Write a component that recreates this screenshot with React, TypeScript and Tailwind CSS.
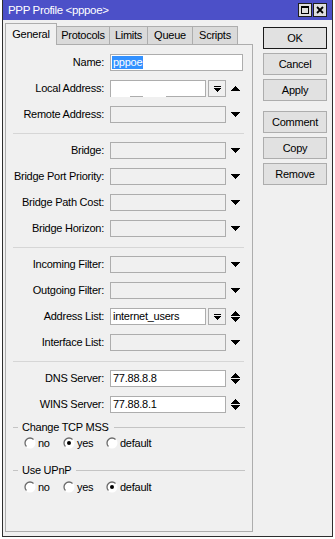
import React from "react";

function Up() {
  return (
    <svg width="9" height="5" viewBox="0 0 9 5" shapeRendering="crispEdges">
      <polygon points="4.5,0 9,5 0,5" fill="#000" />
    </svg>
  );
}
function Down() {
  return (
    <svg width="9" height="5" viewBox="0 0 9 5" shapeRendering="crispEdges">
      <polygon points="0,0 9,0 4.5,5" fill="#000" />
    </svg>
  );
}
function UpDown() {
  return (
    <svg width="9" height="11" viewBox="0 0 9 11" shapeRendering="crispEdges">
      <polygon points="4.5,0 9,5 0,5" fill="#000" />
      <polygon points="0,6 9,6 4.5,11" fill="#000" />
    </svg>
  );
}
function DropBtn() {
  return (
    <div className="ml-[2px] w-[18px] h-[17px] border border-[#adadad] bg-[#f0f0f0] flex items-center justify-center">
      <svg width="7" height="6" viewBox="0 0 7 6" shapeRendering="crispEdges">
        <rect x="0" y="0" width="7" height="1" fill="#000" />
        <polygon points="0,2 7,2 3.5,6" fill="#000" />
      </svg>
    </div>
  );
}

function Radio({ on }: { on?: boolean }) {
  return (
    <svg width="12" height="12" viewBox="0 0 12 12">
      <circle cx="6" cy="6" r="5.5" fill="#ffffff" />
      <path d="M2.46 9.54 A5 5 0 0 1 9.54 2.46" fill="none" stroke="#6a6a6a" strokeWidth="1.3" />
      {on && <circle cx="6" cy="6" r="2" fill="#000" />}
    </svg>
  );
}

function Row({ label, children }: { label: string; children: React.ReactNode }) {
  return (
    <div className="flex items-center h-[17px]">
      <div className="w-[98px] text-right whitespace-nowrap">{label}</div>
      <div className="ml-[6px] flex items-center">{children}</div>
    </div>
  );
}

function Dis({ arrow = "down" }: { arrow?: string }) {
  return (
    <>
      <div className="w-[116px] h-[17px] border border-[#adadad] bg-[#f0f0f0]" />
      <div className="ml-[5px] flex items-center">{arrow === "down" ? <Down /> : <Up />}</div>
    </>
  );
}

function Sep() {
  return <div className="ml-[7px] w-[231px] h-px bg-[#d6d6d6] mt-[10px] mb-[8px]" />;
}

function Group({ title }: { title: string }) {
  return (
    <div className="flex items-center h-[14px]">
      <div className="ml-[7px] w-[5px] h-px bg-[#c4c4c4]" />
      <div className="ml-[4px] whitespace-nowrap">{title}</div>
      <div className="ml-[5px] flex-1 h-px bg-[#c4c4c4] mr-[7px]" />
    </div>
  );
}

function Radios({ value }: { value: number }) {
  return (
    <div className="flex items-center h-[14px] pl-[18px]">
      <div className="w-[39px] flex items-center">
        <Radio on={value === 0} />
        <span className="ml-[2px]">no</span>
      </div>
      <div className="w-[43px] flex items-center">
        <Radio on={value === 1} />
        <span className="ml-[2px]">yes</span>
      </div>
      <div className="flex items-center">
        <Radio on={value === 2} />
        <span className="ml-[2px]">default</span>
      </div>
    </div>
  );
}

function Btn({ children, def }: { children: React.ReactNode; def?: boolean }) {
  return (
    <div
      className={
        "w-[64px] h-[22px] flex items-center justify-center bg-[#e1e1e1] border " +
        (def ? "border-[#1a1a1a]" : "border-[#adadad]")
      }
    >
      {children}
    </div>
  );
}

export default function App() {
  return (
    <div className="w-[335px] h-[539px] bg-white font-['Liberation_Sans',Arial,sans-serif] text-[11px] tracking-[-0.25px] text-black leading-none">
      <div className="ml-[2px] w-[331px] h-[537px] border-l border-r border-b border-[#2e2e2e] bg-[#f0f0f0] flex flex-col">
        {/* title bar */}
        <div className="h-[20px] bg-[#4c50c8] flex items-center">
          <div className="pl-[5px] pt-[2px] text-white text-[11.5px] tracking-[-0.35px] flex-1">
            PPP Profile &lt;pppoe&gt;
          </div>
          <div className="flex items-center gap-[1px] pr-[5px]">
            <div className="w-[14px] h-[14px] border border-[#1e1e1e] bg-[#dedede] flex items-center justify-center">
              <svg width="8" height="8" viewBox="0 0 8 8" shapeRendering="crispEdges">
                <rect x="0.5" y="1" width="7" height="6.5" fill="none" stroke="#000" strokeWidth="1" />
                <rect x="0" y="0" width="8" height="2" fill="#000" />
              </svg>
            </div>
            <div className="w-[14px] h-[14px] border border-[#1e1e1e] bg-[#dedede] flex items-center justify-center">
              <svg width="8" height="8" viewBox="0 0 8 8">
                <path d="M1 1 L7 7 M7 1 L1 7" stroke="#000" strokeWidth="1.8" />
              </svg>
            </div>
          </div>
        </div>

        <div className="flex">
          {/* left: tabs + panel */}
          <div className="pl-[2px] pt-[3px]">
            <div className="w-[248px] h-[22px] flex items-end">
              <div className="w-[52px] h-[22px] border-t border-l border-r border-[#adadad] bg-[#f0f0f0] flex items-center justify-center pb-[1px]">
                General
              </div>
              <div className="w-[53px] h-[19px] border-t border-r border-b border-[#adadad] bg-[#dadada] flex items-center justify-center">
                Protocols
              </div>
              <div className="w-[38px] h-[19px] border-t border-r border-b border-[#adadad] bg-[#dadada] flex items-center justify-center">
                Limits
              </div>
              <div className="w-[45px] h-[19px] border-t border-r border-b border-[#adadad] bg-[#dadada] flex items-center justify-center">
                Queue
              </div>
              <div className="w-[45px] h-[19px] border-t border-r border-b border-[#adadad] bg-[#dadada] flex items-center justify-center">
                Scripts
              </div>
              <div className="flex-1 h-[1px] bg-[#adadad] self-end" />
            </div>
            <div className="w-[248px] h-[487px] border-l border-r border-b border-[#adadad] bg-[#f0f0f0] pt-[9px] flex flex-col">
              <div className="flex flex-col gap-[9px]">
                <Row label="Name:">
                  <div className="w-[133px] h-[17px] border border-[#adadad] bg-white flex items-center pl-[1px]">
                    <span className="bg-[#3391ff] text-white h-[13px] flex items-center px-[1px]">pppoe</span>
                  </div>
                </Row>
                <Row label="Local Address:">
                  <div className="w-[96px] h-[17px] border-t border-l border-r border-[#adadad] bg-white flex flex-col">
                    <div className="flex-1" />
                    <div className="h-px flex">
                      <div className="w-[19px]" />
                      <div className="w-[13px] bg-[#adadad]" />
                      <div className="w-[23px]" />
                      <div className="flex-1 bg-[#adadad]" />
                    </div>
                  </div>
                  <DropBtn />
                  <div className="ml-[5px] flex items-center">
                    <Up />
                  </div>
                </Row>
                <Row label="Remote Address:">
                  <Dis />
                </Row>
              </div>
              <Sep />
              <div className="flex flex-col gap-[9px]">
                <Row label="Bridge:">
                  <Dis />
                </Row>
                <Row label="Bridge Port Priority:">
                  <Dis />
                </Row>
                <Row label="Bridge Path Cost:">
                  <Dis />
                </Row>
                <Row label="Bridge Horizon:">
                  <Dis />
                </Row>
              </div>
              <Sep />
              <div className="flex flex-col gap-[9px]">
                <Row label="Incoming Filter:">
                  <Dis />
                </Row>
                <Row label="Outgoing Filter:">
                  <Dis />
                </Row>
                <Row label="Address List:">
                  <div className="w-[96px] h-[17px] border border-[#adadad] bg-white flex items-center pl-[2px]">
                    internet_users
                  </div>
                  <DropBtn />
                  <div className="ml-[5px] flex items-center">
                    <UpDown />
                  </div>
                </Row>
                <Row label="Interface List:">
                  <Dis />
                </Row>
              </div>
              <Sep />
              <div className="flex flex-col gap-[9px]">
                <Row label="DNS Server:">
                  <div className="w-[116px] h-[17px] border border-[#adadad] bg-white flex items-center pl-[2px]">
                    77.88.8.8
                  </div>
                  <div className="ml-[5px] flex items-center">
                    <UpDown />
                  </div>
                </Row>
                <Row label="WINS Server:">
                  <div className="w-[116px] h-[17px] border border-[#adadad] bg-white flex items-center pl-[2px]">
                    77.88.8.1
                  </div>
                  <div className="ml-[5px] flex items-center">
                    <UpDown />
                  </div>
                </Row>
              </div>
              <div className="mt-[7px]">
                <Group title="Change TCP MSS" />
              </div>
              <div className="mt-[2px]">
                <Radios value={1} />
              </div>
              <div className="mt-[13px]">
                <Group title="Use UPnP" />
              </div>
              <div className="mt-[3px]">
                <Radios value={2} />
              </div>
            </div>
          </div>

          {/* right: buttons */}
          <div className="ml-[10px] pt-[7px] flex flex-col">
            <div className="flex flex-col gap-[4px]">
              <Btn def>OK</Btn>
              <Btn>Cancel</Btn>
              <Btn>Apply</Btn>
            </div>
            <div className="mt-[10px] flex flex-col gap-[4px]">
              <Btn>Comment</Btn>
              <Btn>Copy</Btn>
              <Btn>Remove</Btn>
            </div>
          </div>
        </div>
      </div>
    </div>
  );
}
